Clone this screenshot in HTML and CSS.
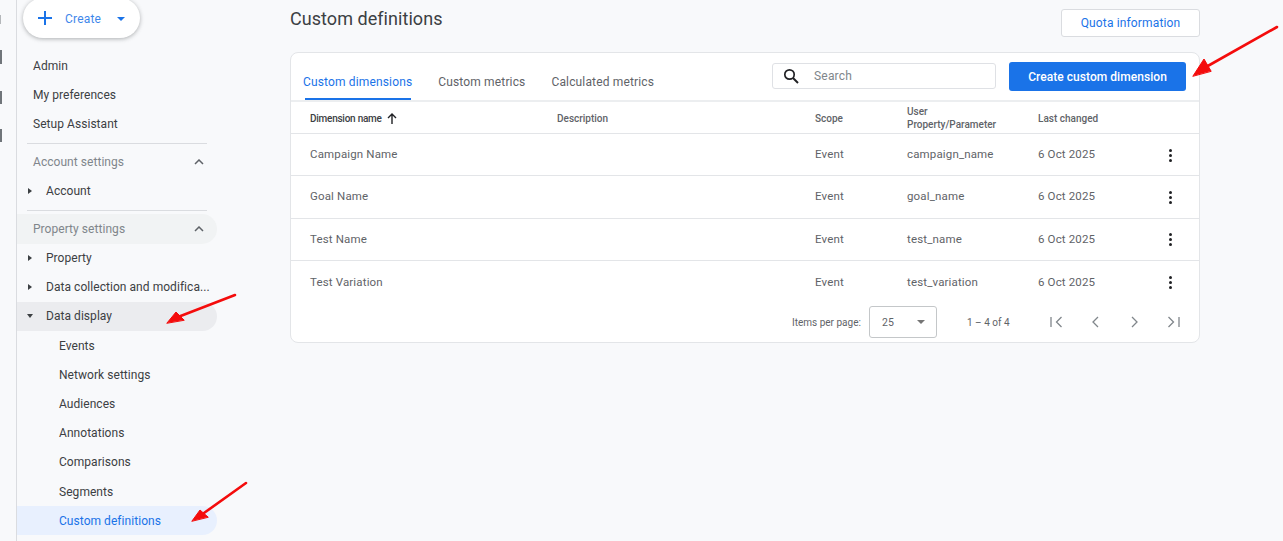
FILE: index.html
```html
<!DOCTYPE html>
<html>
<head>
    <title>Custom definitions</title>
    <link rel="stylesheet" href="styles.css">
</head>
<body>

<div class="page">
    <div class="rail">
        <span class="rail-mark mark-a"></span>
        <span class="rail-mark mark-b"></span>
        <span class="rail-mark mark-c"></span>
        <span class="rail-mark mark-d"></span>
    </div>

    <nav class="nav">
        <button class="create">
            <svg class="create-plus" width="14" height="14" viewBox="0 0 14 14"><path d="M7 0v14M0 7h14" stroke="#1a73e8" stroke-width="2" fill="none"/></svg>
            <span class="create-label">Create</span>
            <span class="caret caret-blue"></span>
        </button>

        <a class="nav-item top-item first">Admin</a>
        <a class="nav-item top-item">My preferences</a>
        <a class="nav-item top-item">Setup Assistant</a>

        <div class="nav-line"></div>
        <div class="nav-item section">
            Account settings
            <svg class="chevron" width="10" height="6" viewBox="0 0 10 6"><path d="M1 5l4-4 4 4" stroke="#5f6368" stroke-width="1.5" fill="none"/></svg>
        </div>
        <a class="nav-item tree-item"><span class="tri"></span>Account</a>

        <div class="nav-line"></div>
        <div class="nav-item section section-on">
            Property settings
            <svg class="chevron" width="10" height="6" viewBox="0 0 10 6"><path d="M1 5l4-4 4 4" stroke="#5f6368" stroke-width="1.5" fill="none"/></svg>
        </div>
        <a class="nav-item tree-item"><span class="tri"></span>Property</a>
        <a class="nav-item tree-item"><span class="tri"></span>Data collection and modifica...</a>
        <a class="nav-item tree-item tree-open"><span class="tri-down"></span>Data display</a>
        <a class="nav-item sub-item">Events</a>
        <a class="nav-item sub-item">Network settings</a>
        <a class="nav-item sub-item">Audiences</a>
        <a class="nav-item sub-item">Annotations</a>
        <a class="nav-item sub-item">Comparisons</a>
        <a class="nav-item sub-item">Segments</a>
        <a class="nav-item sub-item sub-on">Custom definitions</a>
    </nav>

    <main class="main">
        <div class="head">
            <h1>Custom definitions</h1>
            <button class="quota">Quota information</button>
        </div>

        <section class="card">
            <div class="toolbar">
                <div class="tabs">
                    <a class="tab tab-on">Custom dimensions</a>
                    <a class="tab">Custom metrics</a>
                    <a class="tab">Calculated metrics</a>
                </div>
                <div class="search">
                    <svg width="16" height="16" viewBox="0 0 16 16"><circle cx="6.5" cy="6.5" r="4.7" stroke="#202124" stroke-width="1.7" fill="none"/><path d="M10 10l5 5" stroke="#202124" stroke-width="1.9" fill="none"/></svg>
                    <span>Search</span>
                </div>
                <button class="primary">Create custom dimension</button>
            </div>

            <div class="row row-head">
                <div class="sort">Dimension name
                    <svg width="10" height="11" viewBox="0 0 10 11"><path d="M5 11V1.5M1 5l4-4 4 4" stroke="#202124" stroke-width="1.4" fill="none"/></svg>
                </div>
                <div>Description</div>
                <div>Scope</div>
                <div>User<br>Property/Parameter</div>
                <div>Last changed</div>
                <div></div>
            </div>

            <div class="row">
                <div>Campaign Name</div><div></div><div>Event</div><div>campaign_name</div><div>6 Oct 2025</div>
                <div class="dots"><i></i><i></i><i></i></div>
            </div>
            <div class="row">
                <div>Goal Name</div><div></div><div>Event</div><div>goal_name</div><div>6 Oct 2025</div>
                <div class="dots"><i></i><i></i><i></i></div>
            </div>
            <div class="row">
                <div>Test Name</div><div></div><div>Event</div><div>test_name</div><div>6 Oct 2025</div>
                <div class="dots"><i></i><i></i><i></i></div>
            </div>
            <div class="row row-last">
                <div>Test Variation</div><div></div><div>Event</div><div>test_variation</div><div>6 Oct 2025</div>
                <div class="dots"><i></i><i></i><i></i></div>
            </div>

            <div class="pager">
                <span class="pager-label">Items per page:</span>
                <div class="select"><span>25</span><span class="caret caret-grey"></span></div>
                <span class="pager-range">1 – 4 of 4</span>
                <div class="pager-icons">
                    <svg width="13" height="12" viewBox="0 0 13 12"><path d="M1 1v10M11.5 1l-5 5 5 5" stroke="#80868b" stroke-width="1.3" fill="none"/></svg>
                    <svg width="13" height="12" viewBox="0 0 13 12"><path d="M9 1L4 6l5 5" stroke="#80868b" stroke-width="1.3" fill="none"/></svg>
                    <svg width="13" height="12" viewBox="0 0 13 12"><path d="M4 1l5 5-5 5" stroke="#80868b" stroke-width="1.3" fill="none"/></svg>
                    <svg width="13" height="12" viewBox="0 0 13 12"><path d="M12 1v10M1.5 1l5 5-5 5" stroke="#80868b" stroke-width="1.3" fill="none"/></svg>
                </div>
            </div>
        </section>
    </main>

    <!-- red arrows drawn over the screenshot -->
    <svg class="arrows" width="1283" height="541" viewBox="0 0 1283 541">
        <g fill="#f40c0c" stroke="#f40c0c" stroke-linecap="round" stroke-linejoin="round">
            <path d="M1277 27L1206 67" stroke-width="2.6" fill="none"/>
            <path d="M1193 76L1204 59L1211 71Z" stroke-width="1"/>
            <path d="M235 295L178 317" stroke-width="2.6" fill="none"/>
            <path d="M167 323L176 312L184 320Z" stroke-width="1"/>
            <path d="M246 483L204 513" stroke-width="2.6" fill="none"/>
            <path d="M192 521L200 510L208 517Z" stroke-width="1"/>
        </g>
    </svg>
</div>

</body>
</html>
```

FILE: styles.css
```css
* {
    box-sizing: border-box;
}

html, body {
    margin: 0;
    height: 100%;
}

body {
    font-family: Roboto, "Liberation Sans", sans-serif;
    font-size: 12px;
    color: #3c4043;
    background: #f8f9fb;
}

button {
    font-family: inherit;
}

.page {
    position: relative;
    display: flex;
    height: 541px;
    overflow: hidden;
}

/* left rail, almost fully cropped */
.rail {
    width: 17px;
    flex: none;
    position: relative;
    border-right: 1px solid #dadce0;
}

.rail-mark {
    position: absolute;
    left: 0;
    background: #70757a;
}

.mark-a { top: 15px; width: 1px; height: 9px; opacity: .5; }
.mark-b { top: 50px; width: 2px; height: 14px; }
.mark-c { top: 91px; width: 2px; height: 13px; }
.mark-d { top: 129px; width: 2px; height: 13px; }

.nav {
    width: 200px;
    flex: none;
}

.create {
    display: flex;
    align-items: center;
    width: 117px;
    height: 40px;
    margin: -2px 0 0 6px;
    padding: 0 0 0 15px;
    border: none;
    border-radius: 20px;
    background: #fff;
    box-shadow: 0 1px 4px rgba(60, 64, 67, .4);
    color: #1a73e8;
    font-size: 12px;
    letter-spacing: .2px;
}

.create-label {
    margin: 1px 0 0 13px;
    opacity: .85;
}

.caret {
    width: 0;
    height: 0;
}

.caret-blue {
    margin: 1px 0 0 16px;
    border-left: 4px solid transparent;
    border-right: 4px solid transparent;
    border-top: 4.5px solid #1a73e8;
}

.caret-grey {
    border-left: 4.5px solid transparent;
    border-right: 4.5px solid transparent;
    border-top: 4.5px solid #757575;
}

.nav-item {
    display: flex;
    align-items: center;
    height: 29.2px;
    color: #3c4043;
    letter-spacing: .05px;
    white-space: nowrap;
}

.top-item {
    padding-left: 16px;
}

.first {
    margin-top: 13px;
}

.nav-line {
    height: 1px;
    margin: 4px 10px 3.7px;
    background: #dadce0;
}

.section {
    justify-content: space-between;
    padding: 0 13px 0 16px;
    color: #80868b;
}

.section-on {
    background: #f1f3f4;
    border-radius: 0 15px 15px 0;
}

.tree-item {
    padding-left: 11px;
}

.tri {
    flex: none;
    width: 0;
    height: 0;
    margin-right: 14px;
    border-top: 3px solid transparent;
    border-bottom: 3px solid transparent;
    border-left: 4px solid #3c4043;
}

.tri-down {
    flex: none;
    width: 0;
    height: 0;
    margin: 0 13px 0 -1px;
    border-left: 3.5px solid transparent;
    border-right: 3.5px solid transparent;
    border-top: 4px solid #3c4043;
}

.tree-open {
    background: #ebecef;
    border-radius: 0 15px 15px 0;
}

.sub-item {
    padding-left: 42px;
}

.sub-on {
    background: #e8f0fe;
    border-radius: 0 15px 15px 0;
    color: #1a73e8;
}

.main {
    width: 910px;
    margin-left: 73px;
    flex: none;
}

.head {
    display: flex;
    justify-content: space-between;
    align-items: flex-start;
    height: 52px;
    padding-top: 9px;
}

h1 {
    margin: -1px 0 0;
    font-size: 18px;
    font-weight: 400;
    line-height: 21px;
    letter-spacing: .05px;
    color: #3c4043;
}

.quota {
    width: 139px;
    height: 28px;
    border: 1px solid #dadce0;
    border-radius: 3px;
    background: #fff;
    color: #1a73e8;
    font-size: 12px;
    letter-spacing: .15px;
}

.card {
    background: #fff;
    border: 1px solid #e3e5e8;
    border-radius: 8px;
    height: 291px;
}

.toolbar {
    display: flex;
    align-items: flex-start;
    height: 49px;
    border-bottom: 2px solid #eceef0;
    padding: 0 13px 0 12px;
}

.tabs {
    display: flex;
    gap: 26px;
    flex: 1;
    height: 47px;
}

.tab {
    position: relative;
    display: flex;
    align-items: center;
    height: 47px;
    padding-top: 10px;
    color: #5f6368;
    letter-spacing: .15px;
}

.tab-on {
    color: #1a73e8;
}

.tab-on::after {
    content: "";
    position: absolute;
    left: 2px;
    right: 1px;
    bottom: 0;
    height: 2px;
    background: #1a73e8;
}

.search {
    display: flex;
    align-items: center;
    gap: 15px;
    width: 224px;
    height: 26px;
    margin: 10px 13px 0 0;
    padding-left: 10px;
    border: 1px solid #dfe1e5;
    border-radius: 3px;
    color: #80868b;
    letter-spacing: .2px;
}

.primary {
    width: 177px;
    height: 29px;
    margin-top: 9px;
    border: none;
    border-radius: 3px;
    background: #1a73e8;
    color: #fff;
    font-size: 12px;
    font-weight: 500;
    letter-spacing: .05px;
}

.row {
    display: grid;
    grid-template-columns: 247px 258px 92px 131px 129px 1fr;
    align-items: center;
    height: 42.3px;
    padding: 0 0 1px 19px;
    border-bottom: 1px solid #e3e5e8;
    color: #5f6368;
    font-size: 11.5px;
    letter-spacing: .15px;
}

.row-head {
    height: 32px;
    padding: 1px 0 0 19px;
    font-size: 10px;
    font-weight: 500;
    line-height: 13px;
    letter-spacing: 0;
}

.row-last {
    border-bottom: none;
}

.sort {
    display: flex;
    align-items: center;
    gap: 5.5px;
    color: #3c4043;
    letter-spacing: -.25px;
}

.dots {
    display: flex;
    flex-direction: column;
    gap: 2px;
    margin-top: 2px;
    padding-left: 2px;
}

.dots i {
    width: 3px;
    height: 3px;
    border-radius: 50%;
    background: #202124;
}

.pager {
    display: flex;
    align-items: center;
    height: 38px;
    padding-left: 501px;
    font-size: 10px;
    color: #5f6368;
}

.pager-label {
    width: 77px;
}

.select {
    display: flex;
    align-items: center;
    justify-content: space-between;
    width: 68px;
    height: 32px;
    padding: 0 11px 0 12px;
    border: 1px solid #c4c7c9;
    border-radius: 3px;
    font-size: 10.5px;
}

.pager-range {
    width: 76px;
    margin-left: 30px;
}

.pager-icons {
    display: flex;
    gap: 26px;
    margin-left: 7px;
}

.arrows {
    position: absolute;
    left: 0;
    top: 0;
    pointer-events: none;
}
```
